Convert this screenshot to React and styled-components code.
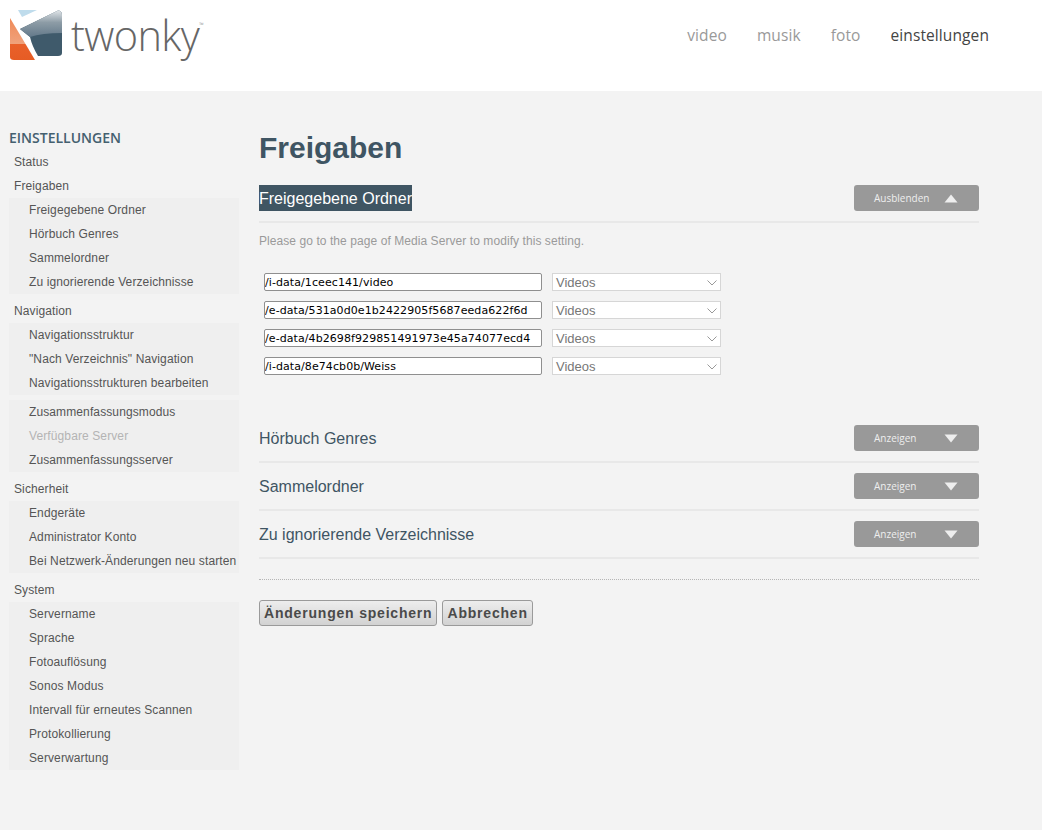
import React from "react";
import styled, { createGlobalStyle } from "styled-components";

const Global = createGlobalStyle`
  html, body { margin: 0; padding: 0; background: #f3f3f3; }
  body { font-family: "Liberation Sans", Arial, sans-serif; }
`;

const Page = styled.div`
  width: 1042px;
  height: 830px;
  overflow: hidden;
  background: #f3f3f3;
`;

const Header = styled.header`
  height: 91px;
  background: #fff;
  display: flex;
  justify-content: space-between;
  align-items: flex-start;
  padding: 0 53px 0 10px;
  box-sizing: border-box;
`;

const Brand = styled.div`
  display: flex;
  align-items: flex-start;
  padding-top: 10px;
`;

const LogoMark = styled.svg`
  width: 52px;
  height: 52px;
  display: block;
`;

const Wordmark = styled.span`
  font-family: "Open Sans", sans-serif;
  font-weight: 300;
  font-size: 41.5px;
  line-height: 50px;
  letter-spacing: -0.6px;
  color: #666;
  margin-left: 9px;
`;

const Tm = styled.sup`
  font-size: 6px;
  line-height: 6px;
  vertical-align: 24px;
  letter-spacing: 0;
  color: #777;
`;

const TopNav = styled.nav`
  display: flex;
  gap: 30px;
  padding-top: 25px;
`;

const TopLink = styled.a`
  font-family: "Open Sans", sans-serif;
  font-size: 15.5px;
  letter-spacing: 0.1px;
  line-height: 20px;
  color: ${(p) => (p.$active ? "#444" : "#999")};
`;

const Body = styled.div`
  display: flex;
  align-items: flex-start;
  padding: 36px 0 0 9px;
`;

const Sidebar = styled.aside`
  width: 230px;
  flex: none;
`;

const SideTitle = styled.h3`
  margin: 0 0 2px;
  font-family: "Open Sans", sans-serif;
  font-size: 14px;
  font-weight: 600;
  line-height: 21px;
  color: #44606f;
`;

const SideItem = styled.div`
  height: 24px;
  line-height: 24px;
  padding-left: ${(p) => (p.$sub ? "20px" : "5px")};
  font-size: 12px;
  letter-spacing: 0.11px;
  white-space: nowrap;
  color: ${(p) => (p.$disabled ? "#b4b4b4" : "#555")};
`;

const SideGroup = styled.div`
  background: #efefef;
  margin-bottom: 5px;
`;

const Main = styled.main`
  width: 720px;
  margin-left: 20px;
  padding-top: 2px;
`;

const PageTitle = styled.h1`
  margin: 0 0 18px;
  font-size: 30px;
  line-height: 38px;
  font-weight: bold;
  color: #3f5563;
`;

const SectionHead = styled.div`
  display: flex;
  justify-content: space-between;
  align-items: flex-start;
  height: 26px;
  padding-bottom: 10px;
  border-bottom: 2px solid #e8e8e8;
`;

const SectionTitle = styled.span`
  font-size: 16px;
  line-height: 25px;
  padding-top: 1px;
  color: ${(p) => (p.$selected ? "#fff" : "#3f5563")};
  background: ${(p) => (p.$selected ? "#3f5563" : "transparent")};
`;

const ToggleButton = styled.button`
  width: 125px;
  height: 26px;
  border: 0;
  border-radius: 3px;
  background: #999;
  color: #eee;
  font-family: "Open Sans", sans-serif;
  font-size: 10px;
  display: flex;
  align-items: center;
  padding: 0 0 0 20px;
`;

const ToggleLabel = styled.span`
  width: 70px;
  text-align: left;
`;

const Note = styled.p`
  margin: 0 0 24px;
  font-size: 12px;
  letter-spacing: 0.07px;
  line-height: 16px;
  padding-top: 10px;
  color: #9a9a9a;
`;

const FolderList = styled.div`
  display: flex;
  flex-direction: column;
  gap: 10px;
  padding-left: 5px;
  margin-bottom: 50px;
`;

const FolderRow = styled.div`
  display: flex;
  gap: 10px;
`;

const PathInput = styled.input`
  width: 278px;
  height: 18px;
  box-sizing: border-box;
  border: 1px solid #8f8f8f;
  border-radius: 2px;
  background: #fff;
  padding: 0 0 0 0;
  font-family: "DejaVu Sans", sans-serif;
  font-size: 11px;
  letter-spacing: 0.08px;
  color: #000;
  outline: none;
`;

const FakeSelect = styled.div`
  width: 169px;
  height: 18px;
  box-sizing: border-box;
  border: 1px solid #d6d6d6;
  background: #fff;
  padding-left: 3px;
  display: flex;
  align-items: center;
  justify-content: space-between;
  font-size: 13px;
  color: #777;
`;

const Chevron = styled.svg`
  width: 10px;
  height: 6px;
  margin-right: 3px;
  margin-top: 2px;
`;

const CollapsedSection = styled(SectionHead)`
  margin-bottom: 10px;
`;

const Actions = styled.div`
  border-top: 1px dotted #b5b5b5;
  margin-top: 20px;
  padding-top: 20px;
  display: flex;
  gap: 5px;
`;

const ActionButton = styled.button`
  height: 26px;
  padding: 0 4px;
  border: 1px solid #9a9a9a;
  border-radius: 3px;
  background: linear-gradient(#ededed, #d2d2d2);
  font-family: "Liberation Sans", sans-serif;
  font-weight: bold;
  font-size: 14px;
  letter-spacing: 0.8px;
  color: #4a4a4a;
`;

const Triangle = ({ up }) => (
  <svg width="14" height="9" viewBox="0 0 14 9">
    <path d={up ? "M7 0.5 L13.5 8.5 L0.5 8.5 Z" : "M7 8.5 L13.5 0.5 L0.5 0.5 Z"} fill="#eee" />
  </svg>
);

const Logo = () => (
  <LogoMark viewBox="0 0 52 52">
    <defs>
      <linearGradient id="greyTop" x1="0" y1="0" x2="0" y2="1">
        <stop offset="0" stopColor="#dfe4e7" />
        <stop offset="0.45" stopColor="#8d9ca6" />
        <stop offset="1" stopColor="#63798a" />
      </linearGradient>
      <linearGradient id="orange" x1="0" y1="0" x2="0" y2="1">
        <stop offset="0" stopColor="#ef8a58" />
        <stop offset="0.62" stopColor="#f0a27c" />
        <stop offset="0.63" stopColor="#e9602a" />
        <stop offset="1" stopColor="#e65c24" />
      </linearGradient>
    </defs>
    <path d="M8 0 L27 0 L12 7 Z" fill="#bfdcec" />
    <path d="M0 8 L0 47 Q0 50 4 50 L25 50 Q12 28 0 8 Z" fill="url(#orange)" />
    <path d="M48 0.5 Q52 0.5 52 5 L52 43 Q52 46 48 46 L28 46 Q22 36 20 27 L10 19 Z" fill="#3f5a6b" />
    <path d="M48 0.5 Q52 0.5 52 5 L52 23 Q32 23 20 27 L10 19 Z" fill="url(#greyTop)" />
  </LogoMark>
);

const sidebar = [
  { items: ["Status", "Freigaben"] },
  { group: ["Freigegebene Ordner", "Hörbuch Genres", "Sammelordner", "Zu ignorierende Verzeichnisse"] },
  { items: ["Navigation"] },
  { group: ["Navigationsstruktur", '"Nach Verzeichnis" Navigation', "Navigationsstrukturen bearbeiten"] },
  { group: ["Zusammenfassungsmodus", "!Verfügbare Server", "Zusammenfassungsserver"] },
  { items: ["Sicherheit"] },
  { group: ["Endgeräte", "Administrator Konto", "Bei Netzwerk-Änderungen neu starten"] },
  { items: ["System"] },
  { group: ["Servername", "Sprache", "Fotoauflösung", "Sonos Modus", "Intervall für erneutes Scannen", "Protokollierung", "Serverwartung"] },
];

const folders = [
  "/i-data/1ceec141/video",
  "/e-data/531a0d0e1b2422905f5687eeda622f6d",
  "/e-data/4b2698f929851491973e45a74077ecd4",
  "/i-data/8e74cb0b/Weiss",
];

export default function App() {
  return (
    <Page>
      <Global />
      <Header>
        <Brand>
          <Logo />
          <Wordmark>
            twonky<Tm>™</Tm>
          </Wordmark>
        </Brand>
        <TopNav>
          <TopLink>video</TopLink>
          <TopLink>musik</TopLink>
          <TopLink>foto</TopLink>
          <TopLink $active>einstellungen</TopLink>
        </TopNav>
      </Header>
      <Body>
        <Sidebar>
          <SideTitle>EINSTELLUNGEN</SideTitle>
          {sidebar.map((s, i) =>
            s.group ? (
              <SideGroup key={i}>
                {s.group.map((t) => (
                  <SideItem key={t} $sub $disabled={t[0] === "!"}>
                    {t.replace("!", "")}
                  </SideItem>
                ))}
              </SideGroup>
            ) : (
              s.items.map((t) => <SideItem key={t}>{t}</SideItem>)
            )
          )}
        </Sidebar>
        <Main>
          <PageTitle>Freigaben</PageTitle>
          <SectionHead>
            <SectionTitle $selected>Freigegebene Ordner</SectionTitle>
            <ToggleButton>
              <ToggleLabel>Ausblenden</ToggleLabel>
              <Triangle up />
            </ToggleButton>
          </SectionHead>
          <Note>Please go to the page of Media Server to modify this setting.</Note>
          <FolderList>
            {folders.map((f) => (
              <FolderRow key={f}>
                <PathInput defaultValue={f} />
                <FakeSelect>
                  Videos
                  <Chevron viewBox="0 0 10 6">
                    <path d="M0.5 0.5 L5 5 L9.5 0.5" fill="none" stroke="#999" />
                  </Chevron>
                </FakeSelect>
              </FolderRow>
            ))}
          </FolderList>
          {["Hörbuch Genres", "Sammelordner", "Zu ignorierende Verzeichnisse"].map((t) => (
            <CollapsedSection key={t}>
              <SectionTitle>{t}</SectionTitle>
              <ToggleButton>
                <ToggleLabel>Anzeigen</ToggleLabel>
                <Triangle />
              </ToggleButton>
            </CollapsedSection>
          ))}
          <Actions>
            <ActionButton>Änderungen speichern</ActionButton>
            <ActionButton>Abbrechen</ActionButton>
          </Actions>
        </Main>
      </Body>
    </Page>
  );
}
